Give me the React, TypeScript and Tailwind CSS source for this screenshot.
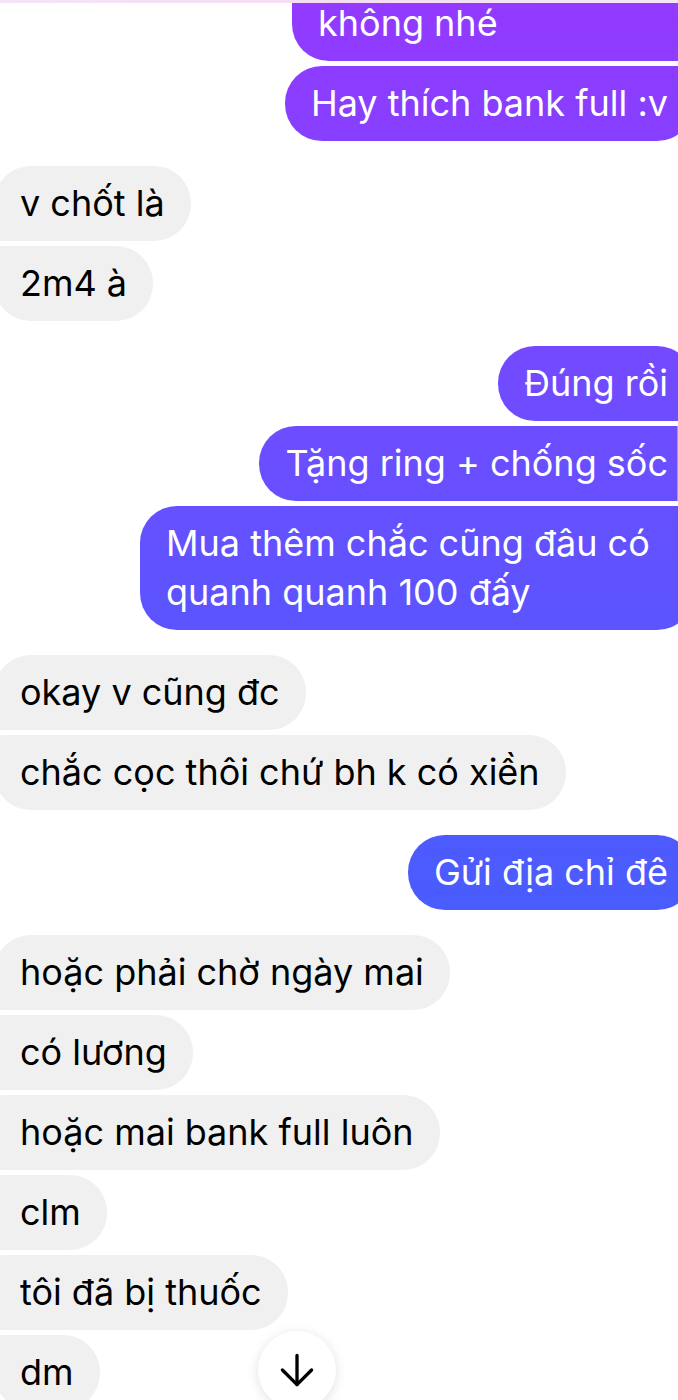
import { ArrowDown } from "lucide-react";

type Msg = { text: string; w?: string };
type Group = { mine: boolean; msgs: Msg[] };

const groups: Group[] = [
  // first bubble is the tail of a longer message scrolled off the top
  { mine: true, msgs: [{ text: "không nhé", w: "w-[402px] pt-[58px]" }, { text: "Hay thích bank full :v" }] },
  { mine: false, msgs: [{ text: "v chốt là" }, { text: "2m4 à" }] },
  {
    mine: true,
    msgs: [
      { text: "Đúng rồi" },
      { text: "Tặng ring + chống sốc" },
      { text: "Mua thêm chắc cũng đâu có quanh quanh 100 đấy", w: "w-[554px]" },
    ],
  },
  { mine: false, msgs: [{ text: "okay v cũng đc" }, { text: "chắc cọc thôi chứ bh k có xiền" }] },
  { mine: true, msgs: [{ text: "Gửi địa chỉ đê" }] },
  {
    mine: false,
    msgs: [
      { text: "hoặc phải chờ ngày mai" },
      { text: "có lương" },
      { text: "hoặc mai bank full luôn" },
      { text: "clm" },
      { text: "tôi đã bị thuốc" },
      { text: "dm" },
    ],
  },
];

function cornerClass(mine: boolean, i: number, n: number) {
  const first = i === 0;
  const last = i === n - 1;
  if (mine) {
    return [
      "rounded-l-[37px]",
      first ? "rounded-tr-[37px]" : "rounded-tr-[8px]",
      last ? "rounded-br-[37px]" : "rounded-br-[8px]",
    ].join(" ");
  }
  return [
    "rounded-r-[37px]",
    first ? "rounded-tl-[37px]" : "rounded-tl-[8px]",
    last ? "rounded-bl-[37px]" : "rounded-bl-[8px]",
  ].join(" ");
}

export default function App() {
  return (
    <div className="relative w-[678px] h-[1400px] overflow-hidden bg-white font-['Inter','Noto_Sans',sans-serif]">
      <div className="relative z-10 h-[3px] bg-gradient-to-r from-[#f3e4f6] via-[#f6dcf3] to-[#f5e6f6]" />
      <div className="-mt-[62px] ml-[-6px] mr-[-16px] flex flex-col gap-[25px]">
        {groups.map((g, gi) => (
          <div key={gi} className={`flex flex-col gap-[5px] ${g.mine ? "items-end" : "items-start"}`}>
            {g.msgs.map((m, i) => (
              <div
                key={i}
                className={`px-[26px] py-[13px] text-[36px] leading-[49px] ${m.w ?? ""} ${cornerClass(
                  g.mine,
                  i,
                  g.msgs.length
                )} ${
                  g.mine
                    ? "max-w-[554px] text-white bg-fixed bg-[linear-gradient(to_bottom,#933aff_0%,#893eff_8%,#6f4cff_29%,#5c54ff_44%,#4a5cfd_64%,#3867fb_100%)]"
                    : "whitespace-nowrap text-black bg-[#f0f0f0]"
                }`}
              >
                {m.text}
              </div>
            ))}
          </div>
        ))}
      </div>
      <div className="absolute left-[258px] top-[1331px] flex h-[78px] w-[78px] items-center justify-center rounded-full bg-white shadow-[0_2px_12px_rgba(0,0,0,0.12)]">
        <ArrowDown size={50} strokeWidth={1.6} className="text-black" />
      </div>
    </div>
  );
}
